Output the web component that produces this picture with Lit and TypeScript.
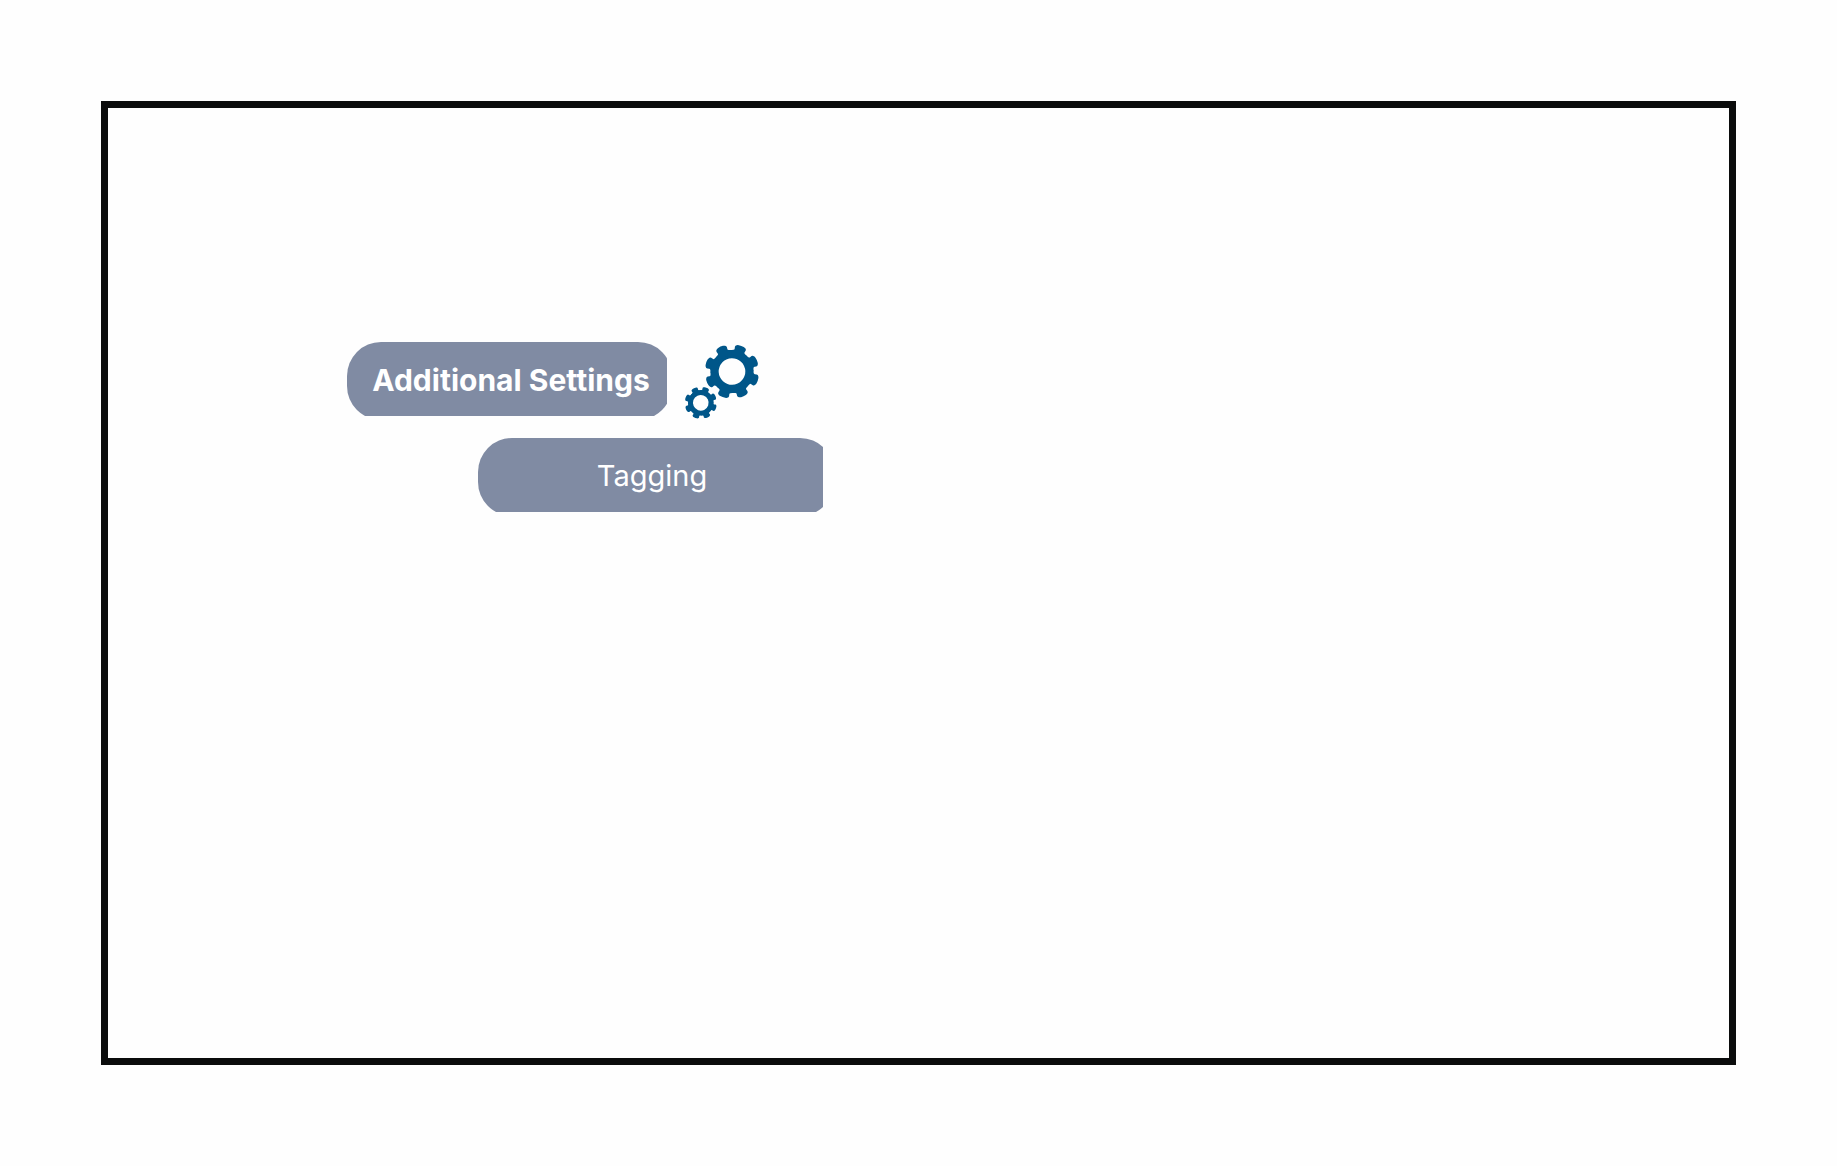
import { LitElement, html, svg, css } from "lit";
import { customElement } from "lit/decorators.js";

const TEETH = [0, 45, 90, 135, 180, 225, 270, 315];

// A gear drawn around 0,0: round body with a hole and eight rounded teeth.
const gear = (cx: number, cy: number, scale: number, turn: number) => svg`
  <g transform="translate(${cx} ${cy}) scale(${scale}) rotate(${turn})">
    <circle r="17.2" fill="none" stroke="currentColor" stroke-width="7.8" />
    ${TEETH.map(
      (a) => svg`<path
        transform="rotate(${a})"
        fill="currentColor"
        d="M-9 -19.4 L-6 -20.9 Q-5 -21.4 -5.3 -22.4 L-5.7 -24.2 Q-5.9 -25.6 -4.6 -26.3 Q-3.8 -26.9 -2.6 -27.1 Q0 -27.6 2.6 -27.1 Q3.8 -26.9 4.6 -26.3 Q5.9 -25.6 5.7 -24.2 L5.3 -22.4 Q5 -21.4 6 -20.9 L9 -19.4 L6 -16 L-6 -16 Z"
      />`
    )}
  </g>
`;

@customElement("app-root")
export class AppRoot extends LitElement {
  static styles = css`
    :host {
      display: block;
      background: #fefefe;
      font-family: Inter, "Liberation Sans", sans-serif;
    }
    .page {
      box-sizing: border-box;
      min-height: 100vh;
      padding: 101px;
      display: flex;
    }
    .board {
      flex: 1;
      box-sizing: border-box;
      border: 7px solid #0b0c0c;
      padding: 234px 239px;
      display: flex;
      flex-direction: column;
      align-items: flex-start;
      gap: 18px;
    }
    .row {
      display: flex;
      align-items: flex-start;
      gap: 12px;
    }
    .pill {
      box-sizing: border-box;
      height: 78px;
      border: 0;
      border-radius: 34px;
      padding: 0 0 2px 3px;
      background: #808ba3;
      color: #fff;
      font: 700 30px/36px Inter, "Liberation Sans", sans-serif;
      white-space: nowrap;
      cursor: pointer;
    }
    .main {
      width: 325px;
      clip-path: inset(0 5px 4px 0);
    }
    .child {
      width: 356px;
      margin-left: 131px;
      padding: 0 8px 2px 0;
      font-size: 29px;
      font-weight: 400;
      clip-path: inset(0 11px 4px 0);
    }
    .gears {
      display: block;
      width: 76px;
      height: 78px;
      color: #005689;
    }
  `;

  render() {
    return html`
      <main class="page">
        <section class="board">
          <div class="row">
            <button class="pill main" type="button">Additional Settings</button>
            <svg class="gears" viewBox="684 342 76 78" aria-hidden="true">
              ${gear(732, 371.5, 1, 20)} ${gear(700.8, 402.8, 0.59, 20)}
            </svg>
          </div>
          <button class="pill child" type="button">Tagging</button>
        </section>
      </main>
    `;
  }
}
